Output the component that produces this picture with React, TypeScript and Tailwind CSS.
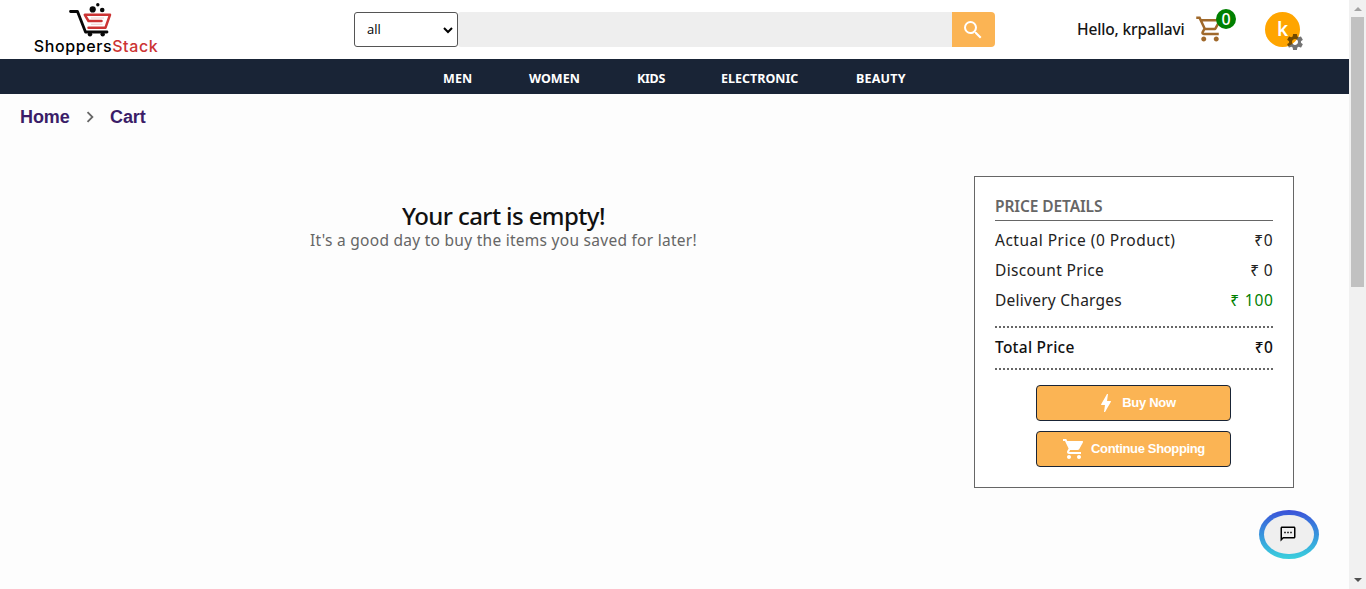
import React from "react";
import { MdBolt, MdNavigateNext, MdOutlineShoppingCart, MdOutlineSms, MdSearch, MdSettings, MdShoppingCart } from "react-icons/md";

function Logo() {
  return (
    <div className="flex w-[124px] flex-col items-center pt-[3px]">
      <svg width="44" height="34" viewBox="0 0 44 34" fill="none" className="-ml-[10px]">
        <path d="M1.5 8.5h7L16.5 29H38" stroke="#080808" strokeWidth="2.8" strokeLinecap="round" strokeLinejoin="round" />
        <path d="M32.5 18H19.5L15.8 11.8H41L36.5 24.7H19.5" stroke="#cc3434" strokeWidth="2.5" strokeLinejoin="round" strokeLinecap="round" />
        <path d="M22 15h13M22 21.3h11.5" stroke="#cc3434" strokeOpacity="0.25" strokeWidth="1" />
        <circle cx="23.7" cy="6.4" r="3.1" fill="#080808" />
        <circle cx="33.2" cy="7" r="2.3" fill="#080808" />
        <circle cx="28.8" cy="1.8" r="1.7" fill="#080808" />
        <circle cx="21" cy="31.3" r="2.2" fill="#080808" />
        <circle cx="33.7" cy="31.3" r="2.2" fill="#080808" />
      </svg>
      <div className="whitespace-nowrap font-['Inter',sans-serif] text-[16px] font-medium leading-[19px] tracking-[0.6px] text-black">
        Shoppers<span className="text-[#cc3434]">Stack</span>
      </div>
    </div>
  );
}

function Header() {
  return (
    <header className="flex h-[59px] bg-white">
      <div className="w-[354px] pl-[34px]"><Logo /></div>
      <div className="mt-3 flex h-[35px] w-[641px]">
        <div className="flex w-[104px] items-center justify-between rounded-[3px] border border-[#555] bg-white pl-3 pr-1 font-['Open_Sans',sans-serif] text-[13px] text-black">
          all
          <svg width="10" height="8" viewBox="0 0 10 8" fill="none"><path d="M1 2l4 4 4-4" stroke="black" strokeWidth="2" /></svg>
        </div>
        <div className="flex-1 rounded-l-[3px] bg-[#eee]" />
        <button className="flex w-[43px] items-center justify-center rounded-r-[4px] bg-[#fbb454] pr-px">
          <MdSearch className="size-6 text-white" />
        </button>
      </div>
      <div className="ml-[82px] mt-[17px] w-[118px] whitespace-nowrap font-['Noto_Sans',sans-serif] text-[15.5px] font-medium leading-6 tracking-[-0.15px] text-[#151515]">Hello, krpallavi</div>
      <div className="relative mt-[14px] size-[30px]">
        <MdOutlineShoppingCart className="size-[30px] text-[#a0692b]" />
        <span className="absolute left-[21px] top-[-5px] flex size-5 items-center justify-center rounded-full bg-[#008000] pb-px font-['Noto_Sans',sans-serif] text-[16px] font-medium text-white">0</span>
      </div>
      <div className="relative ml-10 mt-3 flex size-[35px] items-center justify-center rounded-full bg-[#ffa500] font-['Noto_Sans',sans-serif] text-[19px] font-semibold text-white">
        k
        <MdSettings className="absolute left-[20px] top-[20px] size-5 text-black/55" />
      </div>
    </header>
  );
}

function Navigation() {
  return (
    <nav className="flex h-[35px] bg-[#192436] pl-[443px] pt-[3px] font-['Noto_Sans',sans-serif] text-[12.5px] font-bold leading-[33px] text-white">
      <a className="w-[86px] tracking-[0.1px]">MEN</a>
      <a className="w-[108px] tracking-[0px]">WOMEN</a>
      <a className="w-[84px] tracking-[-0.3px]">KIDS</a>
      <a className="w-[135px] tracking-[0px]">ELECTRONIC</a>
      <a className="tracking-[0.2px]">BEAUTY</a>
    </nav>
  );
}

function PriceRow({ label, value, className }: { label: string; value: string; className: string }) {
  return (
    <div className={`flex h-[30px] items-center justify-between text-[15.5px] ${className}`}>
      <span>{label}</span>
      <span>{value}</span>
    </div>
  );
}

function PriceDetails() {
  return (
    <section className="mt-[48px] h-[312px] w-[320px] border border-[#666] bg-white px-5 pt-[18px] font-['Noto_Sans',sans-serif]">
      <h2 className="h-[26px] border-b border-[#666] text-[15.5px] font-semibold leading-[22px] tracking-[-0.1px] text-[#666]">PRICE DETAILS</h2>
      <div className="mt-[5px]">
        <PriceRow label="Actual Price (0 Product)" value="₹0" className="tracking-[0.5px] text-[#222]" />
        <PriceRow label="Discount Price" value="₹ 0" className="tracking-[0.35px] text-[#222]" />
        <PriceRow label="Delivery Charges" value="₹ 100" className="tracking-[0.25px] text-[#222] [&>span:last-child]:tracking-[0.8px] [&>span:last-child]:-mr-[0.8px] [&>span:last-child]:text-[#008000]" />
      </div>
      <div className="mt-[10px] flex h-[44px] items-center justify-between border-y-2 border-dotted border-[#666] text-[15.5px] font-medium tracking-[0.25px] text-[#111]">
        <span>Total Price</span><span>₹0</span>
      </div>
      <div className="mr-px mt-[15px] flex flex-col items-center gap-[10px] font-['Liberation_Sans',sans-serif] text-[13px] font-bold text-white">
        <button className="flex h-9 w-[195px] items-center justify-center rounded-[4px] border border-[#192436] bg-[#fbb454] pl-[3px]">
          <MdBolt className="mr-1 size-6" /><span className="tracking-[-0.3px]">Buy Now</span>
        </button>
        <button className="flex h-9 w-[195px] items-center justify-center rounded-[4px] border border-[#192436] bg-[#fbb454]">
          <MdShoppingCart className="mr-[5px] size-6" /><span className="tracking-[-0.35px]">Continue Shopping</span>
        </button>
      </div>
    </section>
  );
}

export default function App() {
  return (
    <div className="flex h-[589px] w-[1366px] overflow-hidden bg-[#fdfdfd]">
      <div className="relative w-[1349px]">
        <Header />
        <Navigation />
        <div className="flex h-[34px] items-center pl-5 pt-3 font-['Liberation_Sans',sans-serif] text-[18px] font-bold tracking-[-0.1px] text-[#3b1d68]">
          <a className="w-[59px]">Home</a>
          <MdNavigateNext className="mr-[9px] size-[22px] text-[#666]" />
          <a>Cart</a>
        </div>
        <main className="flex">
          <div className="ml-[33px] w-[941px] pt-[72px] text-center font-['Noto_Sans',sans-serif]">
            <h1 className="text-[24px] font-medium leading-[32px] tracking-[-0.6px] text-[#111]">Your cart is empty!</h1>
            <p className="text-[15.5px] leading-4 tracking-[0.27px] text-[#666]">It's a good day to buy the items you saved for later!</p>
          </div>
          <PriceDetails />
        </main>
        <button className="absolute left-[1259px] top-[510px] flex h-[49px] w-[60px] rounded-[50%] bg-gradient-to-b from-[#3b50d8] to-[#3bd0dc] p-[5px]">
          <span className="flex h-full w-full items-center justify-center rounded-[25px/20px] bg-[#efefef] pb-px pr-[2px] text-black"><MdOutlineSms className="size-[18px]" /></span>
        </button>
      </div>
      <div className="flex w-[17px] flex-col items-center bg-[#f1f1f1]">
        <svg width="17" height="17" viewBox="0 0 17 17"><path d="M5 11h8l-4-4z" fill="#a3a3a3" /></svg>
        <div className="h-[270px] w-[13px] bg-[#c1c1c1]" />
        <svg className="mt-auto" width="17" height="17" viewBox="0 0 17 17"><path d="M5 6h8l-4 4z" fill="#505050" /></svg>
      </div>
    </div>
  );
}
